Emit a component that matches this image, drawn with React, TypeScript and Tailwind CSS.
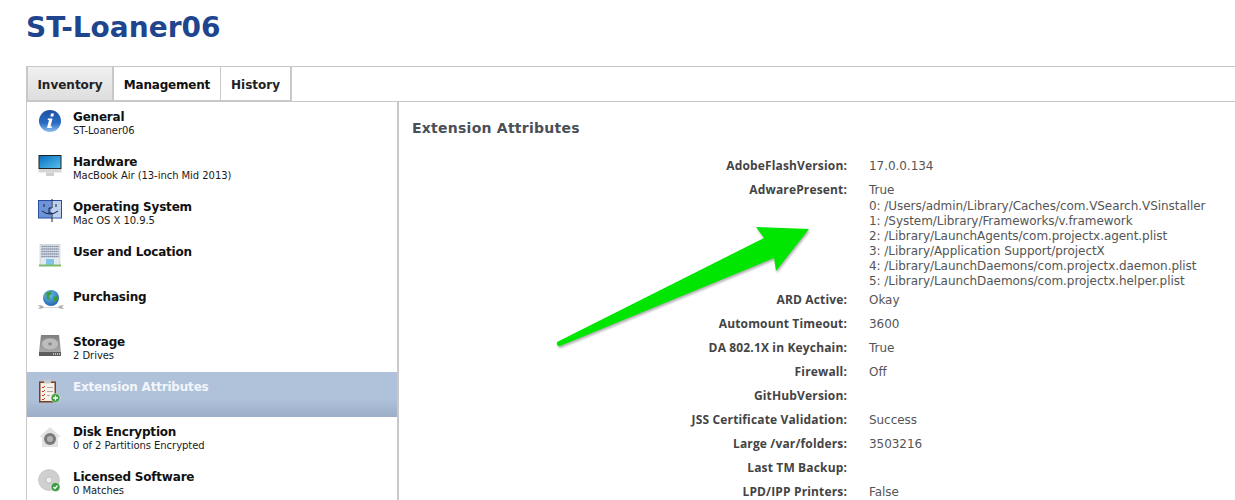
import type { ReactNode } from "react";

const font = { fontFamily: '"DejaVu Sans", sans-serif' };

function InfoIcon() {
  return (
    <svg width="24" height="24" viewBox="0 0 24 24">
      <defs>
        <linearGradient id="info" x1="0" y1="0" x2="0" y2="1">
          <stop offset="0" stopColor="#1d4f9f" />
          <stop offset="0.6" stopColor="#2a6cc4" />
          <stop offset="1" stopColor="#8fc0ee" />
        </linearGradient>
      </defs>
      <circle cx="12" cy="12" r="11" fill="url(#info)" />
      <path d="M13 4.500h3l-.6 3h-3zM10 9.500h4.500l-2 8h1.500l-.4 1.500H9l2-8H9.600z" fill="#fff" />
    </svg>
  );
}

function ImacIcon() {
  return (
    <svg width="24" height="24" viewBox="0 0 24 24">
      <defs>
        <linearGradient id="screen" x1="0" y1="0" x2="1" y2="1">
          <stop offset="0" stopColor="#0a6fc0" />
          <stop offset="1" stopColor="#55c0ec" />
        </linearGradient>
      </defs>
      <rect x="0.500" y="1" width="23" height="14" fill="#222" />
      <rect x="1.500" y="2" width="21" height="12" fill="url(#screen)" />
      <rect x="0.500" y="15" width="23" height="3.500" fill="#d6d6d6" />
      <rect x="8" y="18.500" width="8" height="3.500" fill="#cfcfcf" />
    </svg>
  );
}

function FinderIcon() {
  return (
    <svg width="24" height="24" viewBox="0 -1 24 24">
      <rect x="0.500" y="0.500" width="23" height="17.500" fill="#6d93d8" stroke="#2b4da0" />
      <rect x="13" y="1" width="10" height="16.500" fill="#bcd0ee" />
      <path d="M14 -1.500v9.500h-3v5h3v9M4 11q8 6 16 0M6 4v3M18 4v3" stroke="#1b2238" fill="none" strokeWidth="1" />
    </svg>
  );
}

function BuildingIcon() {
  return (
    <svg width="24" height="24" viewBox="0 0 24 24">
      <rect x="2" y="0.500" width="20" height="21" fill="#e4e9ee" stroke="#b7c0c8" strokeWidth="0.500" />
      <path d="M3.500 2.500h17M3.500 5h17M3.500 7.500h17M3.500 10h17M3.500 12.500h17" stroke="#5e6f8c" strokeWidth="1.300" strokeDasharray="1.200 0.800" />
      <rect x="8" y="15" width="8" height="6.500" fill="#7fc4e6" />
      <rect x="1" y="20.500" width="22" height="2" fill="#7dbb6a" />
    </svg>
  );
}

function PurchasingIcon() {
  return (
    <svg width="28" height="24" viewBox="0 0 28 24" className="-ml-px">
      <defs>
        <radialGradient id="globe" cx="0.400" cy="0.300" r="0.800">
          <stop offset="0" stopColor="#6cc0f0" />
          <stop offset="1" stopColor="#1a5ba8" />
        </radialGradient>
      </defs>
      <circle cx="14" cy="9" r="8" fill="url(#globe)" />
      <path d="M9 4l5-2 1 3-3 2 1 4-3-1zM16 8l4-1 1 3-3 4z" fill="#3f9a3c" />
      <path d="M1 16l4 .5 2 1.500h14l2-1.500 4-.5-2 2 2 2-4-.5-2-1H7l-2 1-4 .5 2-2z" fill="#b0b0b0" />
    </svg>
  );
}

function DriveIcon() {
  return (
    <svg width="24" height="24" viewBox="0 0 24 24">
      <defs>
        <linearGradient id="drive" x1="0" y1="0" x2="0" y2="1">
          <stop offset="0" stopColor="#7f7f7f" />
          <stop offset="1" stopColor="#a8a8a8" />
        </linearGradient>
      </defs>
      <path d="M3 1h18l2 17H1z" fill="url(#drive)" />
      <ellipse cx="12" cy="10" rx="8.500" ry="6" fill="#bcbcbc" stroke="#8a8a8a" strokeWidth="0.500" />
      <ellipse cx="12" cy="10" rx="2" ry="1.400" fill="#8a8a8a" />
      <rect x="1" y="18" width="22" height="4" fill="#5e5e5e" />
      <path d="M15 20h7" stroke="#ddd" strokeWidth="1.500" strokeDasharray="1 1" />
    </svg>
  );
}

function ChecklistIcon() {
  return (
    <svg width="24" height="24" viewBox="0 0 24 24">
      <rect x="1" y="2.500" width="17" height="21" fill="#7c3f1f" />
      <rect x="2.500" y="4" width="14" height="18" fill="#f6f2ea" />
      <rect x="6" y="0.500" width="7" height="4" fill="#c9c9c9" />
      <path d="M4 8l1 1 2-2M4 12l1 1 2-2M4 16l1 1 2-2M4 20l1 1 2-2" stroke="#c8302a" fill="none" strokeWidth="1" />
      <path d="M9 8.500h6M9 12.500h6M9 16.500h3" stroke="#aaa" strokeWidth="1" />
      <circle cx="17.500" cy="19" r="4.500" fill="#3c9c44" stroke="#fff" strokeWidth="0.500" />
      <path d="M17.500 16.500v5M15 19h5" stroke="#fff" strokeWidth="1.300" />
    </svg>
  );
}

function VaultIcon() {
  return (
    <svg width="24" height="24" viewBox="0 -3 24 24">
      <path d="M12 0L23 10h-3v10H4V10H1z" fill="#e2e2e2" />
      <circle cx="12" cy="12" r="6" fill="#7a7a7a" />
      <circle cx="12" cy="12" r="3" fill="#b4b4b4" />
    </svg>
  );
}

function DiscIcon() {
  return (
    <svg width="24" height="24" viewBox="0 0 24 24">
      <circle cx="11" cy="11" r="10.500" fill="#cfcfcf" stroke="#b4b4b4" strokeWidth="0.500" />
      <circle cx="11" cy="11" r="3" fill="#eee" stroke="#a8a8a8" strokeWidth="0.500" />
      <circle cx="17.500" cy="18" r="4.500" fill="#3c9c44" stroke="#fff" strokeWidth="0.500" />
      <path d="M15.500 18l1.500 1.500 2.500-3" stroke="#fff" fill="none" strokeWidth="1.200" />
    </svg>
  );
}

type NavItem = { title: string; sub?: string; icon: ReactNode; active?: boolean };

const navItems: NavItem[] = [
  { title: "General", sub: "ST-Loaner06", icon: <InfoIcon /> },
  { title: "Hardware", sub: "MacBook Air (13-inch Mid 2013)", icon: <ImacIcon /> },
  { title: "Operating System", sub: "Mac OS X 10.9.5", icon: <FinderIcon /> },
  { title: "User and Location", icon: <BuildingIcon /> },
  { title: "Purchasing", icon: <PurchasingIcon /> },
  { title: "Storage", sub: "2 Drives", icon: <DriveIcon /> },
  { title: "Extension Attributes", icon: <ChecklistIcon />, active: true },
  { title: "Disk Encryption", sub: "0 of 2 Partitions Encrypted", icon: <VaultIcon /> },
  { title: "Licensed Software", sub: "0 Matches", icon: <DiscIcon /> },
];

const attributes: { label: string; lines: string[] }[] = [
  { label: "AdobeFlashVersion:", lines: ["17.0.0.134"] },
  {
    label: "AdwarePresent:",
    lines: [
      "True",
      "0: /Users/admin/Library/Caches/com.VSearch.VSinstaller",
      "1: /System/Library/Frameworks/v.framework",
      "2: /Library/LaunchAgents/com.projectx.agent.plist",
      "3: /Library/Application Support/projectX",
      "4: /Library/LaunchDaemons/com.projectx.daemon.plist",
      "5: /Library/LaunchDaemons/com.projectx.helper.plist",
    ],
  },
  { label: "ARD Active:", lines: ["Okay"] },
  { label: "Automount Timeout:", lines: ["3600"] },
  { label: "DA 802.1X in Keychain:", lines: ["True"] },
  { label: "Firewall:", lines: ["Off"] },
  { label: "GitHubVersion:", lines: [] },
  { label: "JSS Certificate Validation:", lines: ["Success"] },
  { label: "Large /var/folders:", lines: ["3503216"] },
  { label: "Last TM Backup:", lines: [] },
  { label: "LPD/IPP Printers:", lines: ["False"] },
];

export default function App() {
  return (
    <div style={font} className="relative h-[500px] w-[1235px] overflow-hidden bg-white">
      <h1 className="pl-[26px] pt-[10px] text-[28px] font-bold leading-[36px] text-[#20458f]">ST-Loaner06</h1>

      <div className="ml-[26px] mt-[20px] border-t border-[#c8c8c8]">
        <div className="flex h-[35px] items-stretch">
          <div className="flex w-[88px] items-center justify-center border-x-2 border-b-2 border-[#c8c8c8] bg-gradient-to-b from-[#f0f0f0] to-[#dedede] pt-[2px] text-[12px] font-bold text-[#222]">
            Inventory
          </div>
          <div className="flex w-[107px] items-center justify-center border-r border-b-2 border-[#c8c8c8] pt-[2px] text-[12px] font-bold tracking-[-0.2px] text-[#111]">
            Management
          </div>
          <div className="flex w-[71px] items-center justify-center border-r-2 border-b-2 border-[#c8c8c8] pt-[2px] text-[12px] font-bold text-[#222]">
            History
          </div>
          <div className="flex-1 border-b border-[#c8c8c8]" />
        </div>

        <div className="flex">
          <nav className="w-[373px] shrink-0 border-l border-r-2 border-[#c8c8c8]">
            {navItems.map((item) => (
              <div
                key={item.title}
                className={`flex h-[45px] pl-[11px] ${item.active ? "bg-gradient-to-b from-[#b0c2da] from-60% to-[#9cadc8]" : ""}`}
              >
                <div className="flex w-[35px] shrink-0 pt-[7px]">{item.icon}</div>
                <div className="pt-[8px]">
                  <div className={`text-[12px] font-bold leading-[15px] tracking-[-0.2px] ${item.active ? "text-[#f2f5fa]" : "text-[#111]"}`}>
                    {item.title}
                  </div>
                  {item.sub && <div className="text-[10px] leading-[12px] tracking-[-0.05px] text-[#1a1a1a]">{item.sub}</div>}
                </div>
              </div>
            ))}
          </nav>

          <main className="flex-1 pl-[13px]">
            <h2 className="pt-[16px] text-[14px] font-bold leading-[20px] tracking-[0.25px] text-[#4a5058]">
              Extension Attributes
            </h2>
            <div className="pt-[21px]">
              {attributes.map((row) => (
                <div key={row.label} className={`flex ${row.lines.length > 1 ? "pb-[4px]" : "pb-[9px]"}`}>
                  <div
                    style={{ fontFamily: '"Open Sans", sans-serif' }}
                    className="-mt-px w-[435px] shrink-0 text-right text-[12px] font-bold leading-[15px] tracking-[0.15px] text-[#444]"
                  >
                    {row.label}
                  </div>
                  <div className="min-h-[15px] pl-[22px] text-[12px] leading-[15px] tracking-[-0.05px] text-[#555]">
                    {row.lines.map((line, i) => (
                      <div key={line} className={`whitespace-nowrap ${i === 1 ? "mt-px" : ""}`}>
                        {line}
                      </div>
                    ))}
                  </div>
                </div>
              ))}
            </div>
          </main>
        </div>
      </div>

      {/* annotation arrow pasted over the screenshot */}
      <svg
        className="absolute left-0 top-0 drop-shadow-[1px_2px_1px_rgba(0,0,0,0.3)]"
        width="1235"
        height="500"
        viewBox="0 0 1235 500"
      >
        <path
          d="M557 342L764 238 756 227 809 229 776 271 774 258 560 346Q556 346 557 342z"
          fill="#00e600"
        />
      </svg>
    </div>
  );
}
